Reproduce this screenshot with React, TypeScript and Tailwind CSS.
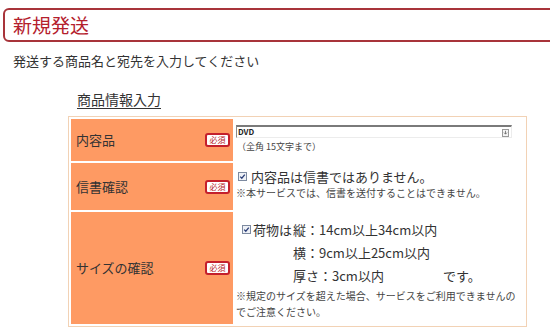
import React from "react";

const font = { fontFamily: '"Noto Sans CJK JP", "Noto Sans", sans-serif' };

function Check() {
  return (
    <svg width="9" height="9" viewBox="0 0 9 9" className="shrink-0">
      <rect x="0.5" y="0.5" width="8" height="8" fill="#eef1f6" stroke="#7d8aa0" />
      <path d="M2.2 4.6 L3.8 6.2 L6.8 2.6" fill="none" stroke="#2c3f78" strokeWidth="1.3" />
    </svg>
  );
}

function Badge() {
  return (
    <span className="inline-flex items-center justify-center w-[25px] h-[14px] bg-white border-2 border-[#c4202c] rounded-[3px] text-[#b81e2a] text-[8px] leading-none">
      必須
    </span>
  );
}

function Label({ text }: { text: string }) {
  return (
    <div className="bg-[#fe9a63] flex items-center justify-between pl-[5px] pr-[3px] text-[13px] text-[#333]">
      <span>{text}</span>
      <Badge />
    </div>
  );
}

export default function App() {
  return (
    <div className="w-[550px] h-[336px] overflow-hidden bg-white text-[#333]" style={font}>
      <div className="mt-[8px] ml-[3px] w-[570px] h-[34px] border-2 border-[#a8343a] rounded-[6px] flex items-center pl-[8px]">
        <span className="text-[19px] leading-[26px] text-[#b4202c]">新規発送</span>
      </div>
      <div className="mt-[11px] pl-[13px] text-[13px] leading-[16px] text-[#333]">
        発送する商品名と宛先を入力してください
      </div>
      <div className="mt-[21px] ml-[77px] text-[14px] leading-[18px] text-[#333] underline underline-offset-[3px]">
        商品情報入力
      </div>
      <div className="mt-[8px] ml-[68px] w-[459px] border border-[#f2d2b5] p-[2px] grid grid-cols-[162px_1fr] grid-rows-[42px_47px_112px] gap-[2px] bg-white">
        <Label text="内容品" />
        <div className="bg-white pt-[6px] pl-[1px]">
          <div className="relative w-[276px] h-[13px] border-t-2 border-l border-t-[#7a7a7a] border-l-[#8a8a8a] border-r border-b border-r-[#ececec] border-b-[#ececec] flex items-center pl-[1px]">
            <span className="text-[8px] leading-none text-[#222] font-semibold">DVD</span>
            <svg width="7" height="8" viewBox="0 0 7 8" className="absolute right-[2px] top-[2px]">
              <rect x="0.5" y="0.5" width="6" height="7" fill="#f4f4f4" stroke="#999" />
              <path d="M3.5 1.8 V5 M2 3.6 L3.5 5.2 L5 3.6" fill="none" stroke="#666" strokeWidth="0.8" />
            </svg>
          </div>
          <div className="mt-[3px] pl-[1px] text-[9px] leading-[12px] text-[#444]">（全角 15文字まで）</div>
        </div>

        <Label text="信書確認" />
        <div className="bg-white pt-[4px] pl-[1px]">
          <div className="flex items-center gap-[4px] pl-[2px] text-[13px] leading-[19px] text-[#333]">
            <Check />
            <span>内容品は信書ではありません。</span>
          </div>
          <div className="text-[10px] leading-[14px] text-[#444]">※本サービスでは、信書を送付することはできません。</div>
        </div>

        <Label text="サイズの確認" />
        <div className="bg-white pt-[6px] pl-[1px] text-[13px] leading-[23px] text-[#333]">
          <div className="flex items-center pl-[6px]">
            <span className="inline-flex items-center gap-[2px] w-[51px] shrink-0">
              <Check />
              <span>荷物は</span>
            </span>
            <span>縦：14cm以上34cm以内</span>
          </div>
          <div className="pl-[57px]">横：9cm以上25cm以内</div>
          <div className="pl-[57px] flex">
            <span className="w-[150px] shrink-0">厚さ：3cm以内</span>
            <span>です。</span>
          </div>
          <div className="mt-[1px] text-[10px] leading-[16px] text-[#444]">
            ※規定のサイズを超えた場合、サービスをご利用できませんの
            <br />
            でご注意ください。
          </div>
        </div>
      </div>
    </div>
  );
}
